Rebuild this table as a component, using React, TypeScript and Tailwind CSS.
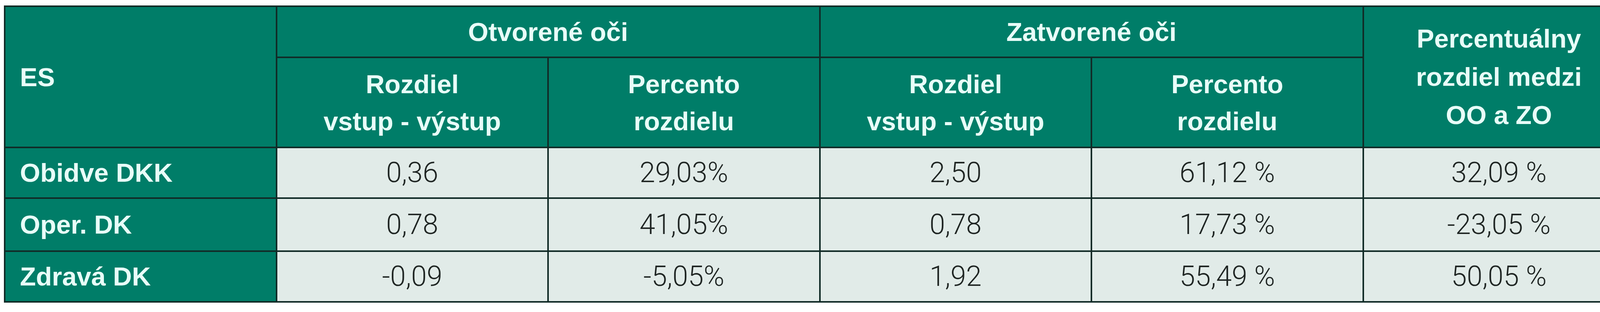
import React from "react";

const rows = [
  { label: "Obidve DKK", v: ["0,36", "29,03%", "2,50", "61,12 %", "32,09 %"] },
  { label: "Oper. DK", v: ["0,78", "41,05%", "0,78", "17,73 %", "-23,05 %"] },
  { label: "Zdravá DK", v: ["-0,09", "-5,05%", "1,92", "55,49 %", "50,05 %"] },
];

export default function App() {
  const head =
    "bg-[#007d68] text-[#e8fdf8] font-bold text-[67px] flex items-center justify-center text-center leading-[95px]";
  return (
    <div className="w-[4217px] h-[800px] bg-white pt-[14px] pl-[10px] font-['Liberation_Sans',Arial,sans-serif]">
      <div className="w-[4177px] grid grid-cols-6 grid-rows-[127px_227px_126px_132px_126px] gap-[4px] p-[4px] bg-[#112b27]">
        <div className={head + " row-span-2 !justify-start pl-[37px]"}>ES</div>
        <div className={head + " col-span-2"}>Otvorené oči</div>
        <div className={head + " col-span-2"}>Zatvorené oči</div>
        <div className={head + " row-span-2 leading-[98px]"}>
          Percentuálny
          <br />
          rozdiel medzi
          <br />
          OO a ZO
        </div>
        <div className={head}>
          Rozdiel
          <br />
          vstup - výstup
        </div>
        <div className={head}>
          Percento
          <br />
          rozdielu
        </div>
        <div className={head}>
          Rozdiel
          <br />
          vstup - výstup
        </div>
        <div className={head}>
          Percento
          <br />
          rozdielu
        </div>
        {rows.map((r) => (
          <React.Fragment key={r.label}>
            <div className="bg-[#007d68] text-[#e8fdf8] font-bold text-[67px] flex items-center pl-[37px]">
              {r.label}
            </div>
            {r.v.map((x, i) => (
              <div
                key={i}
                className="bg-[#e1ebe8] text-[#1f2523] flex items-center justify-center font-['Roboto',sans-serif] font-light text-[72px]"
              >
                {x}
              </div>
            ))}
          </React.Fragment>
        ))}
      </div>
    </div>
  );
}
